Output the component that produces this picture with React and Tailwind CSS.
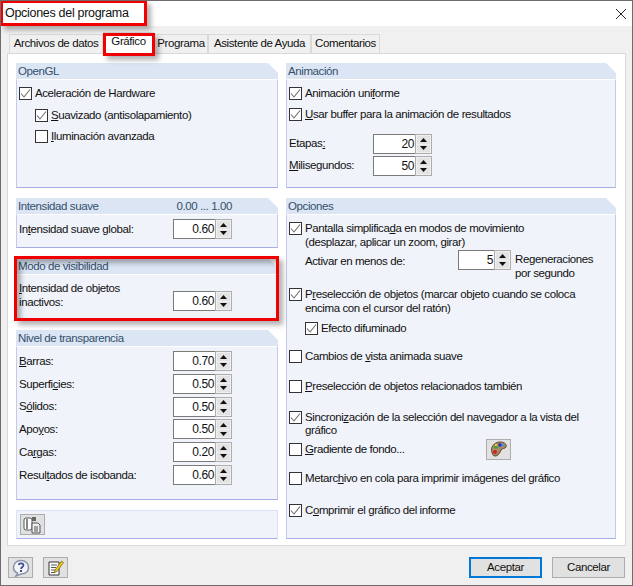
import React from 'react';

const Box = ({ on, className = '' }) => (
  <span className={`flex h-[13px] w-[13px] shrink-0 items-center justify-center border border-[#333333] bg-white ${className}`}>
    {on && (
      <svg width="11" height="11" viewBox="0 0 11 11" fill="none">
        <path d="M1 5.5 L4 9 L10 1.5" stroke="#6f6f6f" strokeWidth="1.1" />
      </svg>
    )}
  </span>
);

const Check = ({ on, className = '', children }) => (
  <div className={`flex items-start gap-[3px] ${className}`}>
    <Box on={on} className="mt-[1px]" />
    <div className="whitespace-nowrap pt-[1px] leading-[13.5px]">{children}</div>
  </div>
);

const Spin = ({ value, w = 'w-[42px]', className = '' }) => (
  <div className={`flex h-[20px] shrink-0 ${className}`}>
    <div className={`flex items-center justify-end border border-r-0 border-[#7a7a7a] bg-white pr-[1px] text-[12px] ${w}`}>{value}</div>
    <div className="flex w-[17px] flex-col gap-[1px] border border-[#adadad] bg-[#f0f0f0] p-[1px]">
      <div className="flex flex-1 items-center justify-center bg-[#e3e3e3]">
        <svg width="7" height="4" viewBox="0 0 7 4"><path d="M3.5 0 L7 4 L0 4 Z" fill="#111" /></svg>
      </div>
      <div className="flex flex-1 items-center justify-center bg-[#e3e3e3]">
        <svg width="7" height="4" viewBox="0 0 7 4"><path d="M0 0 L7 0 L3.5 4 Z" fill="#111" /></svg>
      </div>
    </div>
  </div>
);

const Panel = ({ title, right, className = '', children }) => (
  <div className={`flex flex-col ${className}`}>
    <div className="flex h-[16px] shrink-0 items-center justify-between bg-[#dbe5f3] pl-[2px] pt-[1px] text-[#34506e] [clip-path:polygon(0_0,calc(100%-10px)_0,100%_10px,100%_100%,0_100%)]">
      <span>{title}</span>
      {right && <span className="mr-[46px]">{right}</span>}
    </div>
    <div className="flex-1 border border-t-white border-x-[#c3cbec] border-b-[#a9ade6] bg-[#f0f3fa] px-[2px]">{children}</div>
  </div>
);

const SpinRow = ({ label, value }) => (
  <div className="flex h-[20px] items-center">
    <span className="w-[154px] pt-[1px]">{label}</span>
    <Spin value={value} />
  </div>
);

const IconBtn = ({ className = '', children }) => (
  <div className={`flex h-[21px] w-[25px] items-center justify-center border border-[#adadad] bg-[#e1e1e1] ${className}`}>{children}</div>
);

const Tab = ({ active, className = '', children }) => (
  <div className={`flex items-center justify-center whitespace-nowrap border border-[#d9d9d9] ${active ? 'h-[21px] border-b-0 bg-white' : 'h-[19px] border-b-0 bg-[#f0f0f0]'} ${className}`}>
    {children}
  </div>
);

const App = () => (
  <div className="relative flex h-[586px] w-[633px] flex-col overflow-hidden border border-[#6d6d6d] bg-[#f0f0f0] text-[11.5px] tracking-[-0.4px] text-[#111111] [font-family:'Liberation_Sans',Arial,sans-serif]">
    <div className="flex h-[25px] shrink-0 items-center justify-between bg-white pl-[4px] pr-[5px]">
      <span className="text-[12.5px] tracking-[-0.3px]">Opciones del programa</span>
      <svg width="12" height="12" viewBox="0 0 12 12" fill="none"><path d="M1 1 L11 11 M11 1 L1 11" stroke="#222" strokeWidth="1" /></svg>
    </div>

    <div className="mt-[6px] flex h-[21px] shrink-0 items-end pl-[8px]">
      <Tab className="w-[94px]">Archivos de datos</Tab>
      <Tab active className="w-[51px] pb-[2px]">Gráfico</Tab>
      <Tab className="w-[54px]">Programa</Tab>
      <Tab className="w-[103px]">Asistente de Ayuda</Tab>
      <Tab className="w-[69px]">Comentarios</Tab>
    </div>

    <div className="mx-[6px] flex h-[493px] shrink-0 gap-[8px] border border-[#d9d9d9] bg-white pl-[8px] pt-[9px]">
      <div className="flex w-[262px] flex-col gap-[10px]">
        <Panel title="OpenGL" className="h-[125px]">
          <Check on className="mt-[6px]">Aceleración de Hardware</Check>
          <Check on className="ml-[16px] mt-[7px]"><u>S</u>uavizado (antisolapamiento)</Check>
          <Check className="ml-[16px] mt-[7px]"><u>I</u>luminación avanzada</Check>
        </Panel>
        <Panel title="Intensidad suave" right="0.00 ... 1.00" className="h-[50px]">
          <div className="mt-[4px]"><SpinRow label={<>In<u>t</u>ensidad suave global:</>} value="0.60" /></div>
        </Panel>
        <Panel title="Modo de visibilidad" className="h-[62px]">
          <div className="mt-[7px] flex items-start">
            <span className="w-[154px] leading-[13.5px]"><u>I</u>ntensidad de objetos<br />inactivos:</span>
            <Spin value="0.60" className="mt-[9px]" />
          </div>
        </Panel>
        <Panel title="Nivel de transparencia" className="h-[170px]">
          <div className="mt-[4px] flex flex-col gap-[2.8px]">
            <SpinRow label={<><u>B</u>arras:</>} value="0.70" />
            <SpinRow label={<>Superfi<u>c</u>ies:</>} value="0.50" />
            <SpinRow label={<>S<u>ó</u>lidos:</>} value="0.50" />
            <SpinRow label={<>Apo<u>y</u>os:</>} value="0.50" />
            <SpinRow label={<>Ca<u>r</u>gas:</>} value="0.20" />
            <SpinRow label={<>Resul<u>t</u>ados de isobanda:</>} value="0.60" />
          </div>
        </Panel>
        <div className="h-[29px] border border-[#dbe2f5] border-b-[#a9ade6] bg-[#f0f3fa] pl-[3px] pt-[3px]">
          <IconBtn>
            <svg width="19" height="18" viewBox="0 0 19 18">
              <rect x="1" y="2" width="8" height="12" rx="2" fill="#fff" stroke="#555" />
              <rect x="3" y="3" width="2" height="10" fill="#888" />
              <path d="M9 1 H13 V5 H9 Z" fill="#666" />
              <path d="M9 7 H15 L17 9 V17 H9 Z" fill="#eee" stroke="#555" />
              <path d="M11 11 H15 M11 13 H15 M11 15 H15" stroke="#555" />
            </svg>
          </IconBtn>
        </div>
      </div>

      <div className="flex w-[330px] flex-col gap-[10px]">
        <Panel title="Animación" className="h-[125px]">
          <Check on className="mt-[6px]">Animación uni<u>f</u>orme</Check>
          <Check on className="mt-[6px]"><u>U</u>sar buffer para la animación de resultados</Check>
          <div className="mt-[13px] flex flex-col gap-[2px]">
            <div className="flex h-[20px] items-center"><span className="w-[84px]">Etapas<u>:</u></span><Spin value="20" /></div>
            <div className="flex h-[20px] items-center"><span className="w-[84px]"><u>M</u>ilisegundos:</span><Spin value="50" /></div>
          </div>
        </Panel>
        <Panel title="Opciones" className="h-[341px]">
          <Check on className="mt-[6px]">Pantalla simplifica<u>d</u>a en modos de movimiento<br />(desplazar, aplicar un zoom, girar)</Check>
          <div className="ml-[16px] mt-[1px] flex h-[31px] items-start">
            <span className="w-[153px] pt-[3px]">Activar en menos de:</span>
            <Spin value="5" w="w-[36px]" />
            <span className="ml-[4px] pt-[3px] leading-[13.5px]">Regeneraciones<br />por segundo</span>
          </div>
          <Check on className="mt-[6px]">P<u>r</u>eselección de objetos (marcar objeto cuando se coloca<br />encima con el cursor del ratón)</Check>
          <Check on className="ml-[16px] mt-[6px]">Efecto difuminado</Check>
          <Check className="mt-[13px]">Cambios de <u>v</u>ista animada suave</Check>
          <Check className="mt-[16px]"><u>P</u>reselección de objetos relacionados también</Check>
          <Check on className="mt-[16px]">Sincroni<u>z</u>ación de la selección del navegador a la vista del<br />gráfico</Check>
          <div className="mt-[1px] flex items-center">
            <Check className="w-[197px]"><u>G</u>radiente de fondo...</Check>
            <IconBtn>
              <svg width="18" height="16" viewBox="0 0 18 16">
                <path d="M2 11 C0 7 4 1 10 1 C15 1 17 4 16 6 C15 8 12 7 11 9 C10 12 8 15 5 15 C3 15 2 13 2 11 Z" fill="#a98a6a" stroke="#5a4632" />
                <circle cx="6" cy="6" r="1.7" fill="#2fa52f" />
                <circle cx="10" cy="4" r="1.7" fill="#2233cc" />
                <circle cx="6" cy="4" r="1.2" fill="#e6d21e" />
                <circle cx="5" cy="11" r="2" fill="#d01f1f" />
                <circle cx="13" cy="4.5" r="1.2" fill="#3aa0d0" />
              </svg>
            </IconBtn>
          </div>
          <Check className="mt-[11px]">Metarc<u>h</u>ivo en cola para imprimir imágenes del gráfico</Check>
          <Check on className="mt-[18px]">C<u>o</u>mprimir el gráfico del informe</Check>
        </Panel>
      </div>
    </div>

    <div className="mt-[11px] flex items-start pl-[7px] pr-[7px]">
      <IconBtn>
        <svg width="18" height="18" viewBox="0 0 18 18">
          <path d="M9 1.5 C13.5 1.5 16.5 4.5 16.5 8.5 C16.5 12.5 13.5 15 9 15 L4 17 L5.5 14 C3 13 1.5 11 1.5 8.5 C1.5 4.5 4.5 1.5 9 1.5 Z" fill="#f2f4f8" stroke="#8a94a8" strokeWidth="1.6" />
          <path d="M6.8 6 C7 3.8 11.5 3.8 11.5 6.3 C11.5 8 9 8 9 10" fill="none" stroke="#35508f" strokeWidth="1.7" />
          <rect x="8" y="11" width="2" height="2" fill="#35508f" />
        </svg>
      </IconBtn>
      <IconBtn className="ml-[10px]">
        <svg width="18" height="18" viewBox="0 0 18 18">
          <path d="M2 3 H12 V16 H2 Z" fill="#fff" stroke="#333" />
          <path d="M4 6 H10 M4 8.5 H9 M4 11 H8 M4 13.5 H8" stroke="#555" />
          <path d="M8 11 L14.5 2 L16.5 3.5 L10 12.5 L7.5 13.5 Z" fill="#f2c81d" stroke="#6b5a10" strokeWidth="0.7" />
        </svg>
      </IconBtn>
      <div className="ml-auto flex gap-[10px]">
        <div className="flex h-[21px] w-[73px] items-center justify-center border-2 border-[#0078d7] bg-[#e1e1e1]">Aceptar</div>
        <div className="flex h-[21px] w-[73px] items-center justify-center border border-[#adadad] bg-[#e1e1e1]">Cancelar</div>
      </div>
    </div>

    <div className="pointer-events-none absolute left-[-1px] top-[-1px] h-[26px] w-[147px] border-[3px] border-[#f00000] shadow-[4px_4px_5px_rgba(0,0,0,0.3)]" />
    <div className="pointer-events-none absolute left-[102px] top-[32px] h-[23px] w-[52px] border-[3px] border-[#f00000] shadow-[4px_4px_5px_rgba(0,0,0,0.3)]" />
    <div className="pointer-events-none absolute left-[13px] top-[255px] h-[65px] w-[265px] border-[3px] border-[#f00000] shadow-[4px_4px_5px_rgba(0,0,0,0.3),inset_4px_4px_5px_rgba(0,0,0,0.3)]" />
  </div>
);

export default App;
